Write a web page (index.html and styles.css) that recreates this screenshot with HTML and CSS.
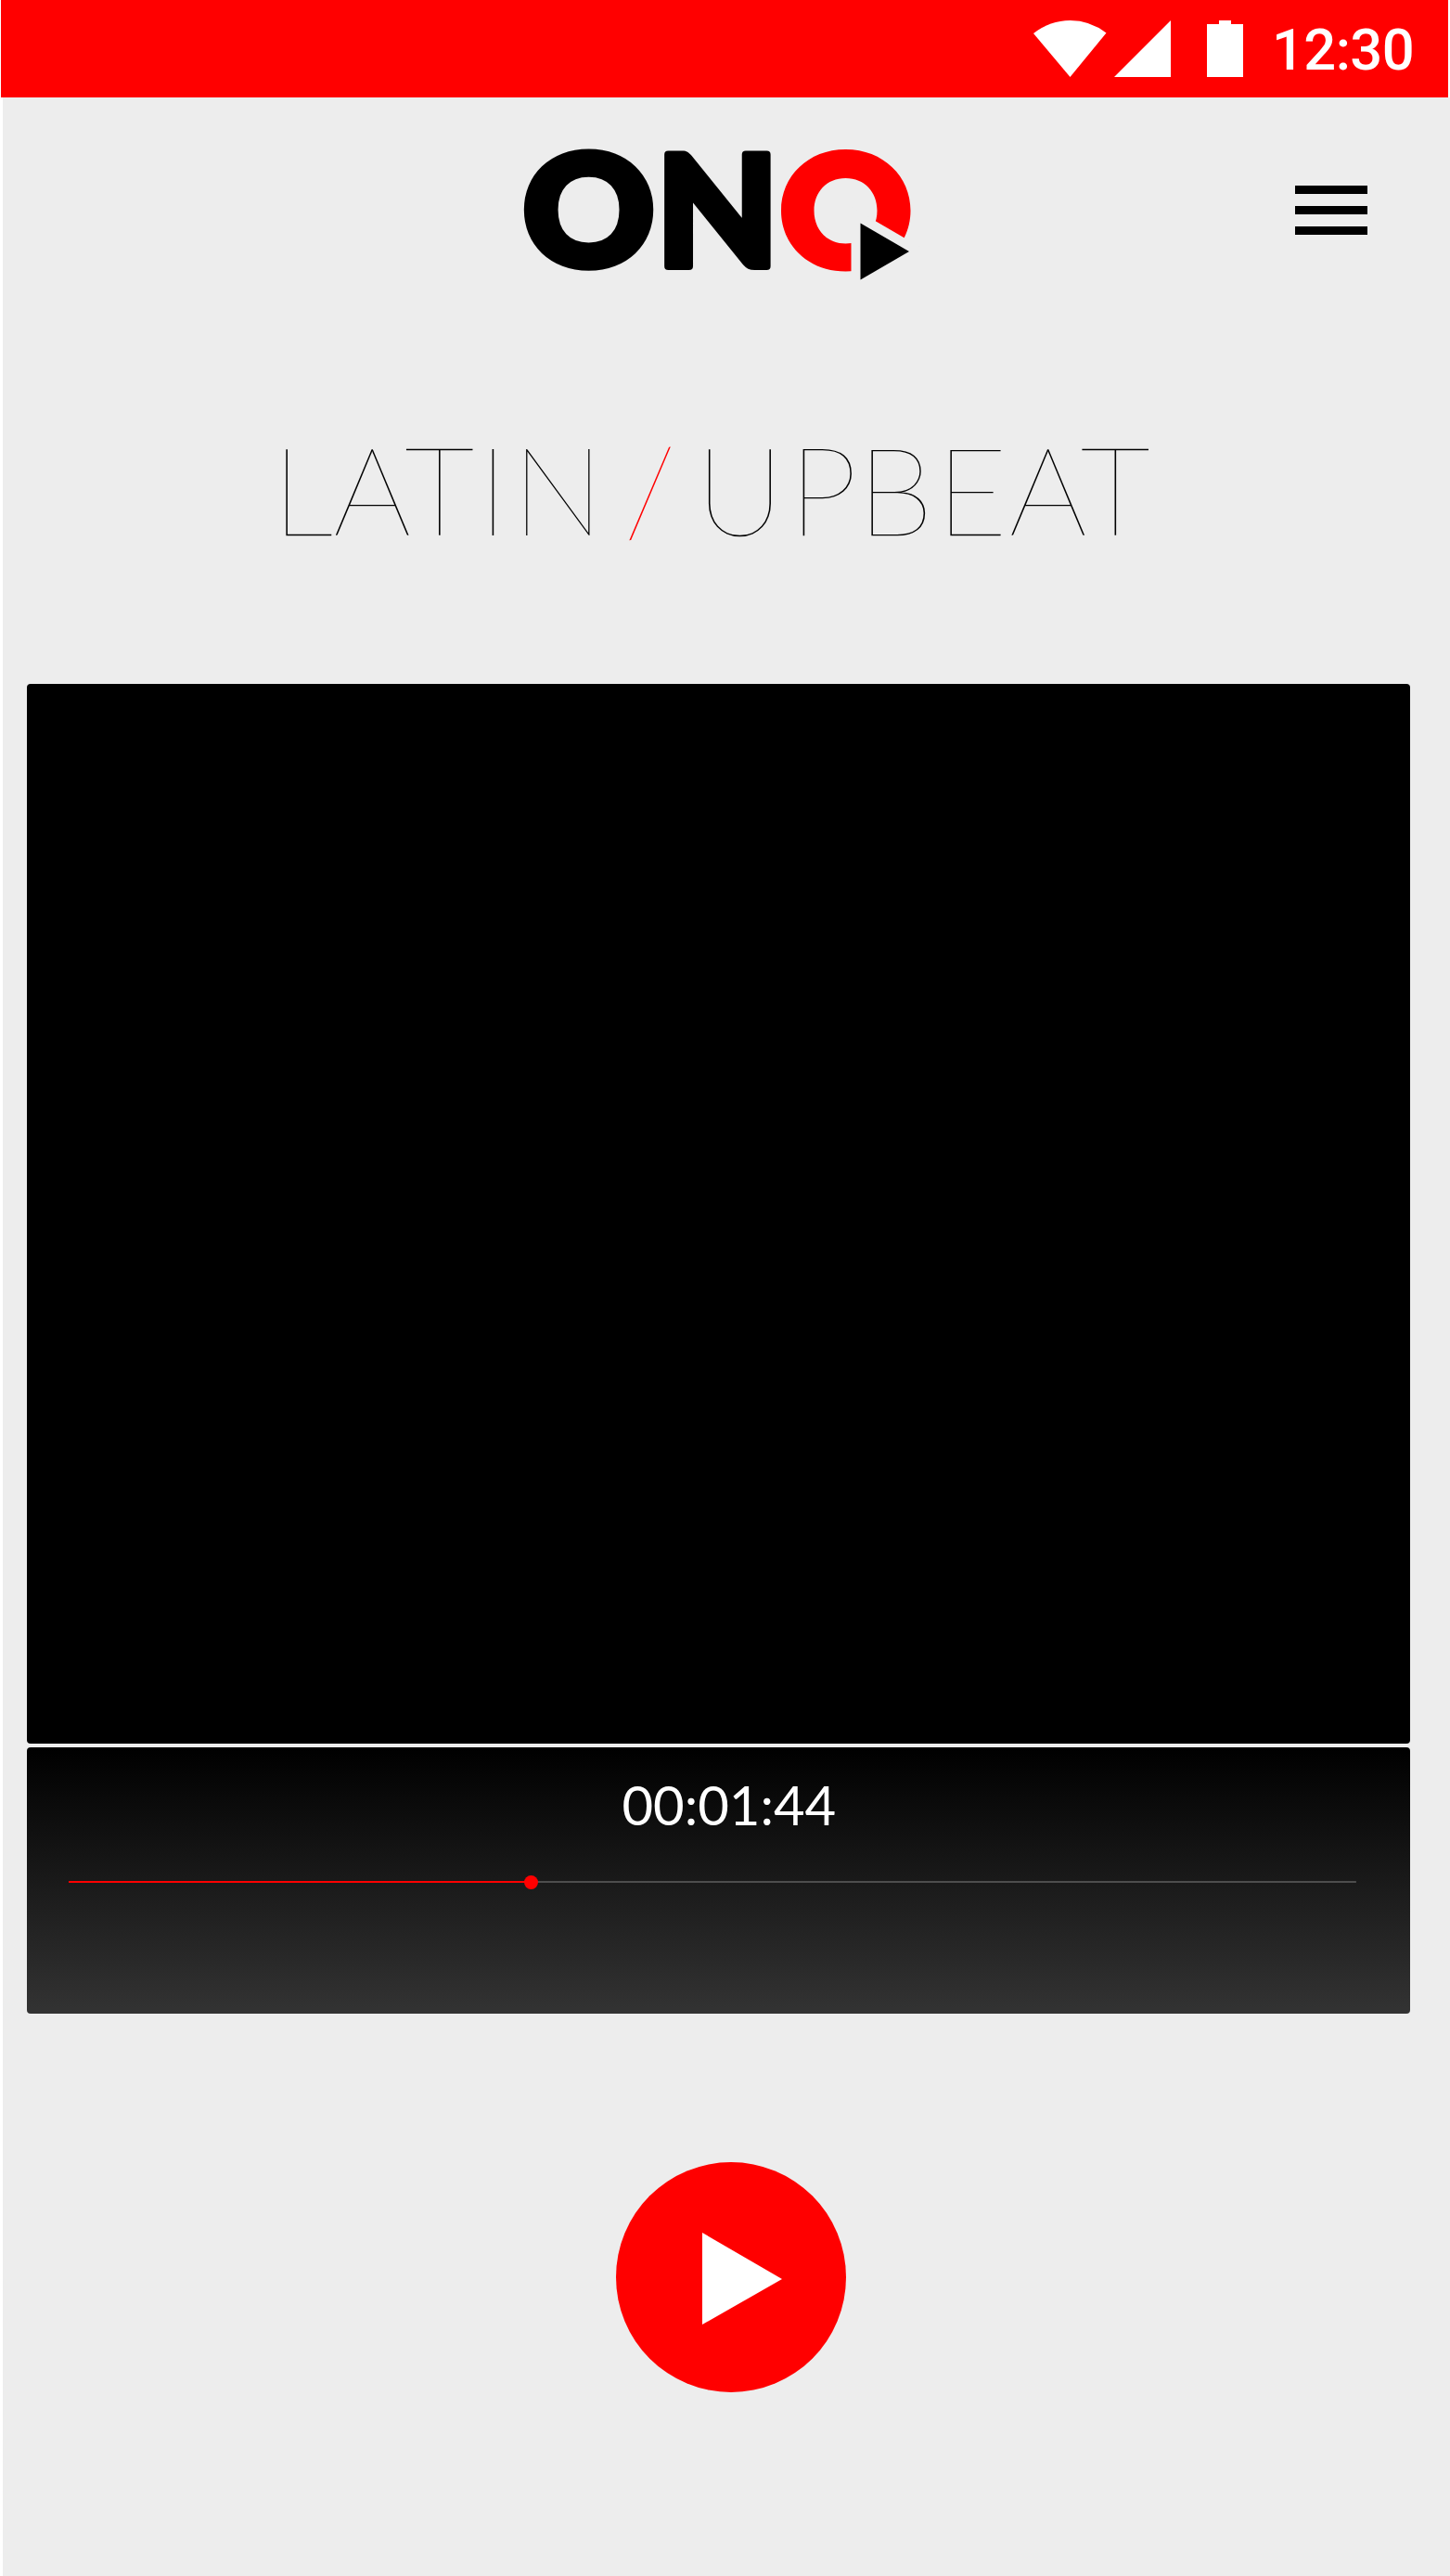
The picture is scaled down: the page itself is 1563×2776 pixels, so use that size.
FILE: index.html
```html
<!DOCTYPE html>
<html lang="en">
<head>
<meta charset="utf-8">
<title>ONQ</title>
<link rel="stylesheet" href="styles.css">
</head>
<body>
<div class="status">
  <svg class="signals" width="230" height="62" viewBox="0 0 230 62" fill="#fff">
    <path d="M0 14Q18 0 39.500 0T78.500 13.500L39.500 61Z"/>
    <path d="M148 0V61H87Z"/>
    <path d="M187 4H200V0H213V4H226V61H187Z"/>
  </svg>
  <span class="clock">12:30</span>
</div>
<main class="screen">
  <header class="top">
    <svg class="logo" width="420" height="145" viewBox="0 0 420 145" aria-label="ONQ">
      <text class="logo-o" transform="translate(70.500 125) scale(1.055 1)" text-anchor="middle">O</text>
      <text class="logo-n" transform="translate(209.300 125.500) scale(1.03 1)" text-anchor="middle">N</text>
      <path class="logo-ring" fill-rule="evenodd" d="M347.500 0C388 0 417.500 29 417.500 66C417.500 103 388 131.500 347.500 131.500C307 131.500 278 103 278 66C278 29 307 0 347.500 0ZM347.500 31C327 31 313.500 46 313.500 66C313.500 86 327 101.500 347.500 101.500C368 101.500 381.500 86 381.500 66C381.500 46 368 31 347.500 31Z"/>
      <path class="logo-gap" d="M353.500 62L430 106.500L430 145H353.500Z"/>
      <path d="M363.500 79.500L416 110L363.500 140.500Z"/>
    </svg>
    <div class="menu"><i></i><i></i><i></i></div>
  </header>
  <h1 class="title"><span><span class="kern-l">L</span><span class="kern-a">A</span>TIN</span><span class="slash">/</span><span><span class="kern-u">U</span><span class="kern-p">P</span><span class="kern-b">B</span><span class="kern-e">E</span><span class="kern-a">A</span>T</span></h1>
  <section class="video"></section>
  <section class="player">
    <div class="time">00:01:44</div>
    <div class="track"><div class="played" style="width:499px"></div><div class="knob"></div></div>
  </section>
  <button class="play" aria-label="Play">
    <svg width="248" height="248" viewBox="0 0 248 248"><path fill="#fff" d="M93 76L179 126L93 175Z"/></svg>
  </button>
</main>
</body>
</html>
```
FILE: styles.css
```css
* { box-sizing: border-box; }
body { margin: 0; width: 1563px; height: 2776px; background: #fff; overflow: hidden; font-family: Lato, sans-serif; }
.status { display: flex; align-items: flex-start; height: 104.500px; width: 1560px; margin-left: 1px; padding: 22px 37px 0 1113px; background: #f00; }
.signals { flex: none; }
.clock { margin-left: 27px; margin-top: -4px; font: 500 61.500px/72px Roboto, sans-serif; letter-spacing: -0.600px; color: #fff; }
.screen { margin-left: 3px; height: 2672px; background: #ededed; display: flex; flex-direction: column; }
.top { display: flex; justify-content: space-between; padding: 56px 89px 0 561px; height: 250px; }
.logo { flex: none; overflow: visible; }
.logo text { font-family: Lato, sans-serif; font-weight: 900; font-size: 166px; stroke: #000; stroke-width: 8px; stroke-linejoin: round; }
.logo .logo-o { font-size: 165px; stroke-width: 9.500px; }
.logo-ring { fill: #f00; }
.logo-gap { fill: #ededed; }
.menu { display: flex; flex-direction: column; gap: 13px; width: 78px; padding-top: 39px; }
.menu i { height: 9px; background: #000; }
.title { display: flex; margin: 101px 0 0 290px; font-size: 132.500px; line-height: 140px; height: 140px; font-weight: 100; white-space: nowrap; letter-spacing: 4px; }
.kern-l { letter-spacing: -0.200px; }
.kern-a { letter-spacing: -7.500px; }
.kern-u { letter-spacing: 5px; }
.kern-p { letter-spacing: -0.300px; }
.kern-b { letter-spacing: 3px; }
.kern-e { letter-spacing: 1.300px; }
.slash { color: #f00; margin: 0 17.300px 0 18px; }
.video { margin: 141.700px 42.800px 0 26.200px; height: 1141.500px; background: #000; border-radius: 4px; }
.player { margin: 4px 42.800px 0 26.200px; height: 287.300px; border-radius: 4px; background: linear-gradient(#000, #333); padding: 27px 58.500px 0 44.800px; }
.time { font-size: 58px; line-height: 70px; color: #fff; text-align: center; padding-left: 36px; }
.track { display: flex; align-items: center; height: 15px; margin-top: 41px; background: linear-gradient(#4d4d4d, #4d4d4d) center / 100% 2px no-repeat; }
.played { height: 2px; background: #f00; }
.knob { width: 15px; height: 15px; margin-left: -8px; border-radius: 50%; background: #f00; }
.play { margin: 160px 0 0 660.500px; width: 248px; height: 248px; padding: 0; border: 0; border-radius: 50%; background: #f00; }
.play svg { display: block; }
```
